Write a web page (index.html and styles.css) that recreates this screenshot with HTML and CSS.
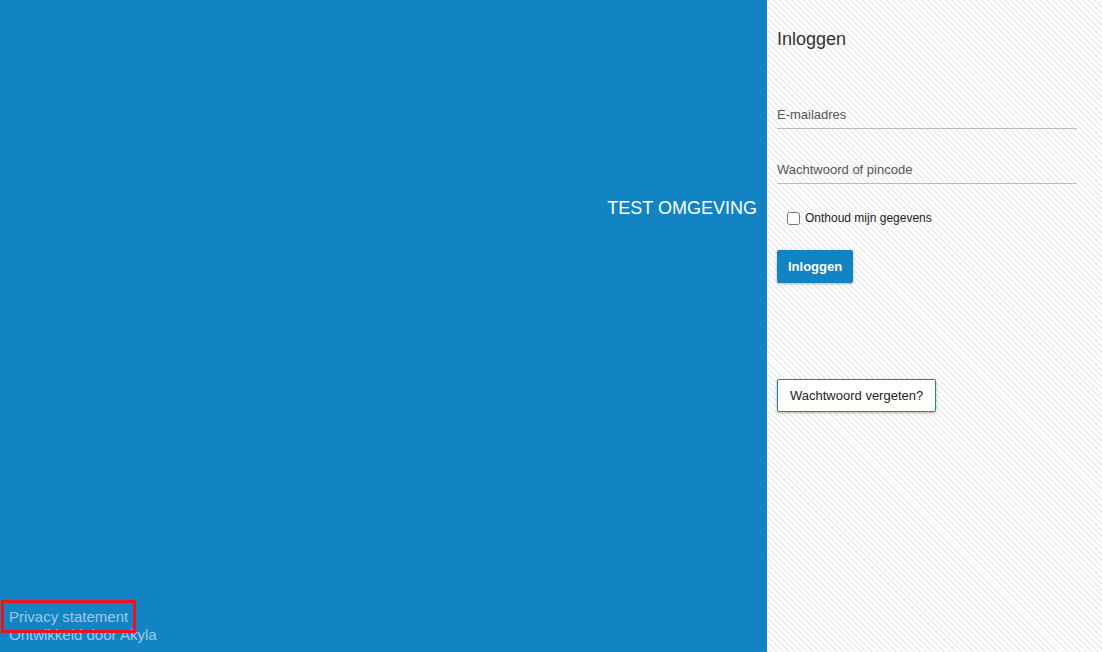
FILE: index.html
```html
<!DOCTYPE html>
<html lang="nl">
  <head>
    <meta charset="UTF-8" />
    <meta name="viewport" content="width=device-width, initial-scale=1.0" />
    <title>Inloggen</title>
    <link rel="stylesheet" href="styles.css">
  </head>
  <body>
    <div class="side">
      <div class="env">TEST OMGEVING</div>
      <div class="footer">
        <a href="#" class="privacy">Privacy statement</a>
        <div class="credit">Ontwikkeld door Akyla</div>
      </div>
    </div>

    <div class="login">
      <h2>Inloggen</h2>
      <form>
        <input type="email" class="field" placeholder="E-mailadres" />
        <input type="password" class="field" placeholder="Wachtwoord of pincode" />

        <label class="remember">
          <input type="checkbox" /> Onthoud mijn gegevens
        </label>

        <button type="submit" class="btn-primary">Inloggen</button>
      </form>

      <button type="button" class="btn-forgot">Wachtwoord vergeten?</button>
    </div>
  </body>
</html>
```

FILE: styles.css
```css
html,
body {
  height: 100%;
}

body {
  margin: 0;
  display: flex;
  font-family: "Liberation Sans", Arial, sans-serif;
  overflow: hidden;
}

.side {
  flex: 1;
  background-color: #1283c3;
  display: flex;
  flex-direction: column;
}

.env {
  margin-top: 198px;
  padding-right: 10px;
  text-align: right;
  color: white;
  font-size: 18px;
  line-height: 20px;
}

.footer {
  margin-top: auto;
  padding: 0 0 8px 9px;
  font-size: 15px;
  line-height: 18px;
  color: #a0c9e9;
}

.privacy {
  color: #a0c9e9;
  text-decoration: none;
  outline: 3px solid #e8141e;
  outline-offset: 5px;
}

.login {
  width: 325px;
  padding-left: 10px;
  background-color: #fff;
  background-image: repeating-linear-gradient(
    45deg,
    #fff 0,
    #fff 2.8px,
    #ececec 2.8px,
    #ececec 4.2px
  );
}

h2 {
  margin: 28px 0 0;
  font-size: 18px;
  font-weight: normal;
  line-height: 22px;
  color: #333;
}

form {
  margin-top: 51px;
  width: 300px;
}

.field {
  display: block;
  width: 100%;
  box-sizing: border-box;
  margin: 0 0 27px;
  padding: 4px 0 3px;
  border: none;
  border-bottom: 1px solid #bbb;
  background: transparent;
  font-family: inherit;
  font-size: 13px;
  line-height: 20px;
  outline: none;
}

.field::placeholder {
  color: #555;
}

.remember {
  display: flex;
  align-items: center;
  margin: 0 0 0 10px;
  font-size: 12px;
  color: #222;
}

.remember input {
  width: 13px;
  height: 13px;
  margin: 1px 5px 0 0;
}

.btn-primary {
  margin-top: 25px;
  height: 33px;
  padding: 0 11px;
  border: none;
  border-radius: 2px;
  background-color: #1283c3;
  color: white;
  font-family: inherit;
  font-size: 13px;
  font-weight: bold;
  box-shadow: 0 1px 3px rgba(0, 0, 0, 0.3);
  cursor: pointer;
}

.btn-forgot {
  margin-top: 96px;
  height: 33px;
  padding: 0 12px;
  border: 1px solid #1283c3;
  border-radius: 2px;
  background-color: #fff;
  color: #222;
  font-family: inherit;
  font-size: 13px;
  box-shadow: 0 1px 3px rgba(0, 0, 0, 0.3);
  cursor: pointer;
}
```
